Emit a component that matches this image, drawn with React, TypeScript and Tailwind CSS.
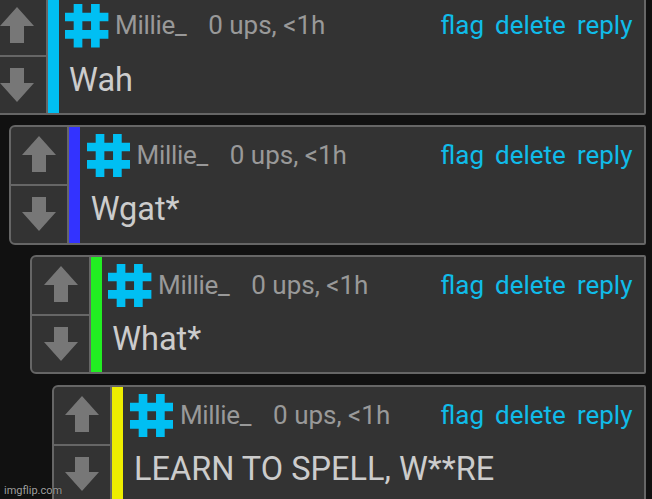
import clsx from "clsx"

type Comment = {
    text: string
    indent: string
    bar: string
}

const comments: Comment[] = [
    { text: "Wah", indent: "ml-[-12.7px]", bar: "bg-[#00bff3]" },
    { text: "Wgat*", indent: "ml-[8.9px]", bar: "bg-[#3333ff]" },
    { text: "What*", indent: "ml-[30.4px]", bar: "bg-[#22ee22]" },
    { text: "LEARN TO SPELL, W**RE", indent: "ml-[52.2px]", bar: "bg-[#eeee00]" },
]

const actions = ["flag", "delete", "reply"]

const UpArrow = () => (
    <svg viewBox="0 0 34 36" className="w-[34px] h-9 shrink-0 fill-[#777777]">
        <path d="M17 0 34 19H24V36H10V19H0Z" />
    </svg>
)

const DownArrow = () => (
    <svg viewBox="0 0 34 34" className="w-[34px] h-[34px] shrink-0 fill-[#777777]">
        <path d="M10 0H24V15H34L17 34 0 15H10Z" />
    </svg>
)

const HashIcon = () => (
    <svg viewBox="0 0 10 10" className="w-[43.4px] h-[43.4px] shrink-0 fill-[#00bff3]">
        <path
            fillRule="evenodd"
            d="M2 0H4V2H6V0H8V2H10V4H8V6H10V8H8V10H6V8H4V10H2V8H0V6H2V4H0V2H2ZM4 4V6H6V4Z"
        />
    </svg>
)

const CommentCard = ({ comment }: { comment: Comment }) => {
    return (
        <article
            className={clsx(
                "flex h-[119.2px] shrink-0 mr-[6.5px] border-2 border-[#666666] rounded-l-md rounded-r-xs bg-[#333333] overflow-hidden",
                comment.indent
            )}
        >
            <div className="flex flex-col w-[58.3px] shrink-0 border-r-2 border-[#666666]">
                <div className="flex justify-center h-[59px] pt-[9px] border-b-2 border-[#666666]">
                    <UpArrow />
                </div>
                <div className="flex justify-center pt-[11px]">
                    <DownArrow />
                </div>
            </div>
            <div className={clsx("w-[11px] shrink-0", comment.bar)} />
            <div className="flex flex-col grow pl-[6.5px] pr-[11px] pt-[6.6px]">
                <div className="flex h-[43.4px] text-[26px] leading-[43.4px] whitespace-nowrap text-[#999999]">
                    <HashIcon />
                    <span className="ml-[6.5px] tracking-[-0.3px]">Millie_</span>
                    <span className="ml-[21.8px]">0 ups, &lt;1h</span>
                    <div className="flex gap-[11px] ml-auto text-[#10bce9]">
                        {actions.map((action) => (
                            <a key={action}>{action}</a>
                        ))}
                    </div>
                </div>
                <p className="pl-[4px] pt-[13px] text-[32.5px] leading-[38px] whitespace-nowrap text-[#cccccc]">
                    {comment.text}
                </p>
            </div>
        </article>
    )
}

export default function App() {
    return (
        <main className="relative w-[652px] h-[499px] overflow-hidden bg-[#111111] font-[Roboto,sans-serif]">
            <div className="flex flex-col gap-[10.6px] -mt-[4.3px]">
                {comments.map((comment) => (
                    <CommentCard key={comment.text} comment={comment} />
                ))}
            </div>
            <span className="absolute left-1 bottom-[2px] text-[11px] leading-[13px] text-[#a0a0a0] [text-shadow:0_0_1px_#000]">
                imgflip.com
            </span>
        </main>
    )
}
